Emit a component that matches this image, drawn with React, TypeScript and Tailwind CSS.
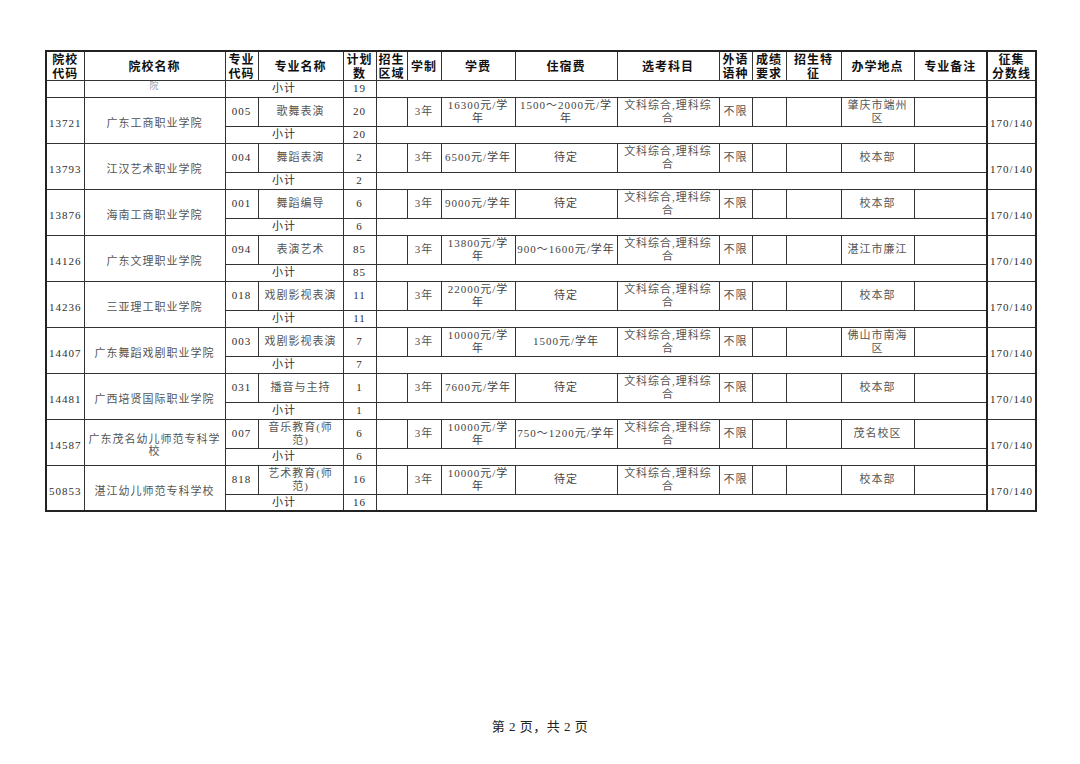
import React from 'react';

interface Row {
  code: string;
  school: string[];
  major: string;
  name: string[];
  plan: string;
  fee: string[];
  dorm: string[];
  place: string[];
}

const ROWS: Row[] = [
  { code: '13721', school: ['广东工商职业学院'], major: '005', name: ['歌舞表演'], plan: '20', fee: ['16300元/学', '年'], dorm: ['1500～2000元/学', '年'], place: ['肇庆市端州', '区'] },
  { code: '13793', school: ['江汉艺术职业学院'], major: '004', name: ['舞蹈表演'], plan: '2', fee: ['6500元/学年'], dorm: ['待定'], place: ['校本部'] },
  { code: '13876', school: ['海南工商职业学院'], major: '001', name: ['舞蹈编导'], plan: '6', fee: ['9000元/学年'], dorm: ['待定'], place: ['校本部'] },
  { code: '14126', school: ['广东文理职业学院'], major: '094', name: ['表演艺术'], plan: '85', fee: ['13800元/学', '年'], dorm: ['900～1600元/学年'], place: ['湛江市廉江'] },
  { code: '14236', school: ['三亚理工职业学院'], major: '018', name: ['戏剧影视表演'], plan: '11', fee: ['22000元/学', '年'], dorm: ['待定'], place: ['校本部'] },
  { code: '14407', school: ['广东舞蹈戏剧职业学院'], major: '003', name: ['戏剧影视表演'], plan: '7', fee: ['10000元/学', '年'], dorm: ['1500元/学年'], place: ['佛山市南海', '区'] },
  { code: '14481', school: ['广西培贤国际职业学院'], major: '031', name: ['播音与主持'], plan: '1', fee: ['7600元/学年'], dorm: ['待定'], place: ['校本部'] },
  { code: '14587', school: ['广东茂名幼儿师范专科学', '校'], major: '007', name: ['音乐教育(师', '范)'], plan: '6', fee: ['10000元/学', '年'], dorm: ['750～1200元/学年'], place: ['茂名校区'] },
  { code: '50853', school: ['湛江幼儿师范专科学校'], major: '818', name: ['艺术教育(师', '范)'], plan: '16', fee: ['10000元/学', '年'], dorm: ['待定'], place: ['校本部'] },
];

const WIDTHS = [38, 141, 33, 85, 33, 31, 34, 74, 102, 102, 33, 34, 55, 73, 73, 49];

const HEAD: string[][] = [
  ['院校', '代码'],
  ['院校名称'],
  ['专业', '代码'],
  ['专业名称'],
  ['计划', '数'],
  ['招生', '区域'],
  ['学制'],
  ['学费'],
  ['住宿费'],
  ['选考科目'],
  ['外语', '语种'],
  ['成绩', '要求'],
  ['招生特', '征'],
  ['办学地点'],
  ['专业备注'],
  ['征集', '分数线'],
];

function Lines({ lines }: { lines: string[] }) {
  return (
    <>
      {lines.map((l, i) => (
        <div key={i} className="whitespace-nowrap">
          {l}
        </div>
      ))}
    </>
  );
}

const td = 'border border-[#333] p-0 px-[1px] text-center align-middle';

export default function App() {
  return (
    <div className="w-[1080px] h-[764px] bg-white overflow-hidden font-['Liberation_Serif','Noto_Sans_CJK_SC',serif] text-[#2e2e2e]">
      <div className="pt-[50px] pl-[45px]">
        <table className="table-fixed border-collapse border-2 border-[#222] w-[990px] text-[11px] leading-[12.5px] tracking-[1px]">
          <colgroup>
            {WIDTHS.map((w, i) => (
              <col key={i} style={{ width: w }} />
            ))}
          </colgroup>
          <thead>
            <tr className="h-[29px]">
              {HEAD.map((h, i) => (
                <th
                  key={i}
                  className={`${td} font-['Noto_Sans_CJK_SC',sans-serif] font-bold text-[12px] leading-[13.5px] text-[#111] ${i === 15 ? 'border-l-2 border-l-[#222]' : ''}`}
                >
                  <Lines lines={h} />
                </th>
              ))}
            </tr>
          </thead>
          <tbody>
            <tr className="h-[17px]">
              <td className={td}></td>
              <td className={`${td} align-top text-[#999] text-[9px] leading-[10px]`}>院</td>
              <td colSpan={2} className={td}>小计</td>
              <td className={td}>19</td>
              <td colSpan={10} className={td}></td>
              <td className={`${td} border-l-2 border-l-[#222]`}></td>
            </tr>
            {ROWS.map((r) => (
              <React.Fragment key={r.code}>
                <tr className="h-[29px]">
                  <td rowSpan={2} className={`${td} pt-[6px]`}>{r.code}</td>
                  <td rowSpan={2} className={`${td} pt-[6px] text-[#555]`}>
                    <Lines lines={r.school} />
                  </td>
                  <td className={td}>{r.major}</td>
                  <td className={`${td} text-[#555]`}>
                    <Lines lines={r.name} />
                  </td>
                  <td className={td}>{r.plan}</td>
                  <td className={td}></td>
                  <td className={`${td} text-[#555]`}>3年</td>
                  <td className={`${td} text-[#444]`}>
                    <Lines lines={r.fee} />
                  </td>
                  <td className={`${td} text-[#444]`}>
                    <Lines lines={r.dorm} />
                  </td>
                  <td className={`${td} text-[#555]`}>
                    <Lines lines={['文科综合,理科综', '合']} />
                  </td>
                  <td className={`${td} text-[#555]`}>不限</td>
                  <td className={td}></td>
                  <td className={td}></td>
                  <td className={`${td} text-[#555]`}>
                    <Lines lines={r.place} />
                  </td>
                  <td className={td}></td>
                  <td rowSpan={2} className={`${td} pt-[6px] border-l-2 border-l-[#222]`}>170/140</td>
                </tr>
                <tr className="h-[17px]">
                  <td colSpan={2} className={td}>小计</td>
                  <td className={td}>{r.plan}</td>
                  <td colSpan={10} className={td}></td>
                </tr>
              </React.Fragment>
            ))}
          </tbody>
        </table>
      </div>
      <div className="mt-[207px] text-center text-[13px] leading-[16px] tracking-[0.5px] text-[#222]">
        第 2 页，共 2 页
      </div>
    </div>
  );
}
